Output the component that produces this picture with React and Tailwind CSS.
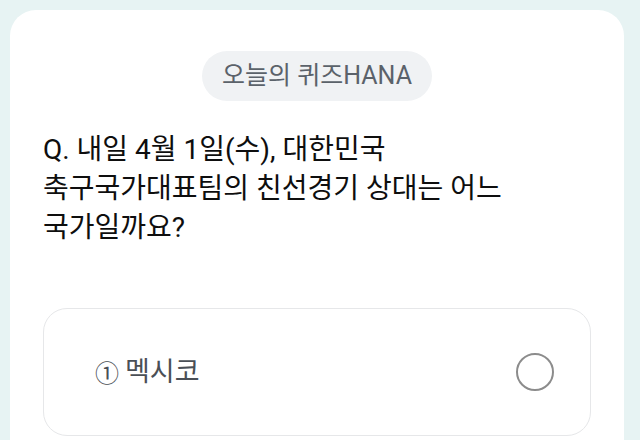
import React from "react";

const options = [{ num: "①", label: "멕시코" }];

const App = () => {
  return (
    <div
      className="w-[640px] h-[440px] overflow-hidden bg-[#e7f3f3] pt-[10px] pl-[10px]"
      style={{ fontFamily: "Roboto, 'Noto Sans CJK KR', sans-serif" }}
    >
      <div className="w-[614px] h-[460px] bg-white rounded-[26px] px-[33px] pt-[41px]">
        {/* Quiz badge */}
        <div className="flex justify-center">
          <span className="h-[50px] px-[20px] flex items-center rounded-full bg-[#f0f2f4] text-[25px] text-[#5b626a]">
            오늘의 퀴즈HANA
          </span>
        </div>

        {/* Question */}
        <p className="mt-[29px] text-[28px] leading-[39px] font-normal text-[#0e0e0e]">
          Q. 내일 4월 1일(수), 대한민국
          <br />
          축구국가대표팀의 친선경기 상대는 어느
          <br />
          국가일까요?
        </p>

        {/* Options */}
        <div className="mt-[61px] flex flex-col gap-4">
          {options.map((opt) => (
            <div
              key={opt.label}
              className="h-[128px] border border-[#e6e7e9] rounded-[24px] flex items-center justify-between pl-[51px] pr-[36px]"
            >
              <span className="text-[27px] text-[#4a4f56] flex items-center gap-[6px]">
                <span className="font-['Noto_Sans_CJK_KR'] text-[24px]">{opt.num}</span>
                {opt.label}
              </span>
              <span className="w-[38px] h-[38px] rounded-full border-[2.5px] border-[#8c8c8c]" />
            </div>
          ))}
        </div>
      </div>
    </div>
  );
};

export default App;
